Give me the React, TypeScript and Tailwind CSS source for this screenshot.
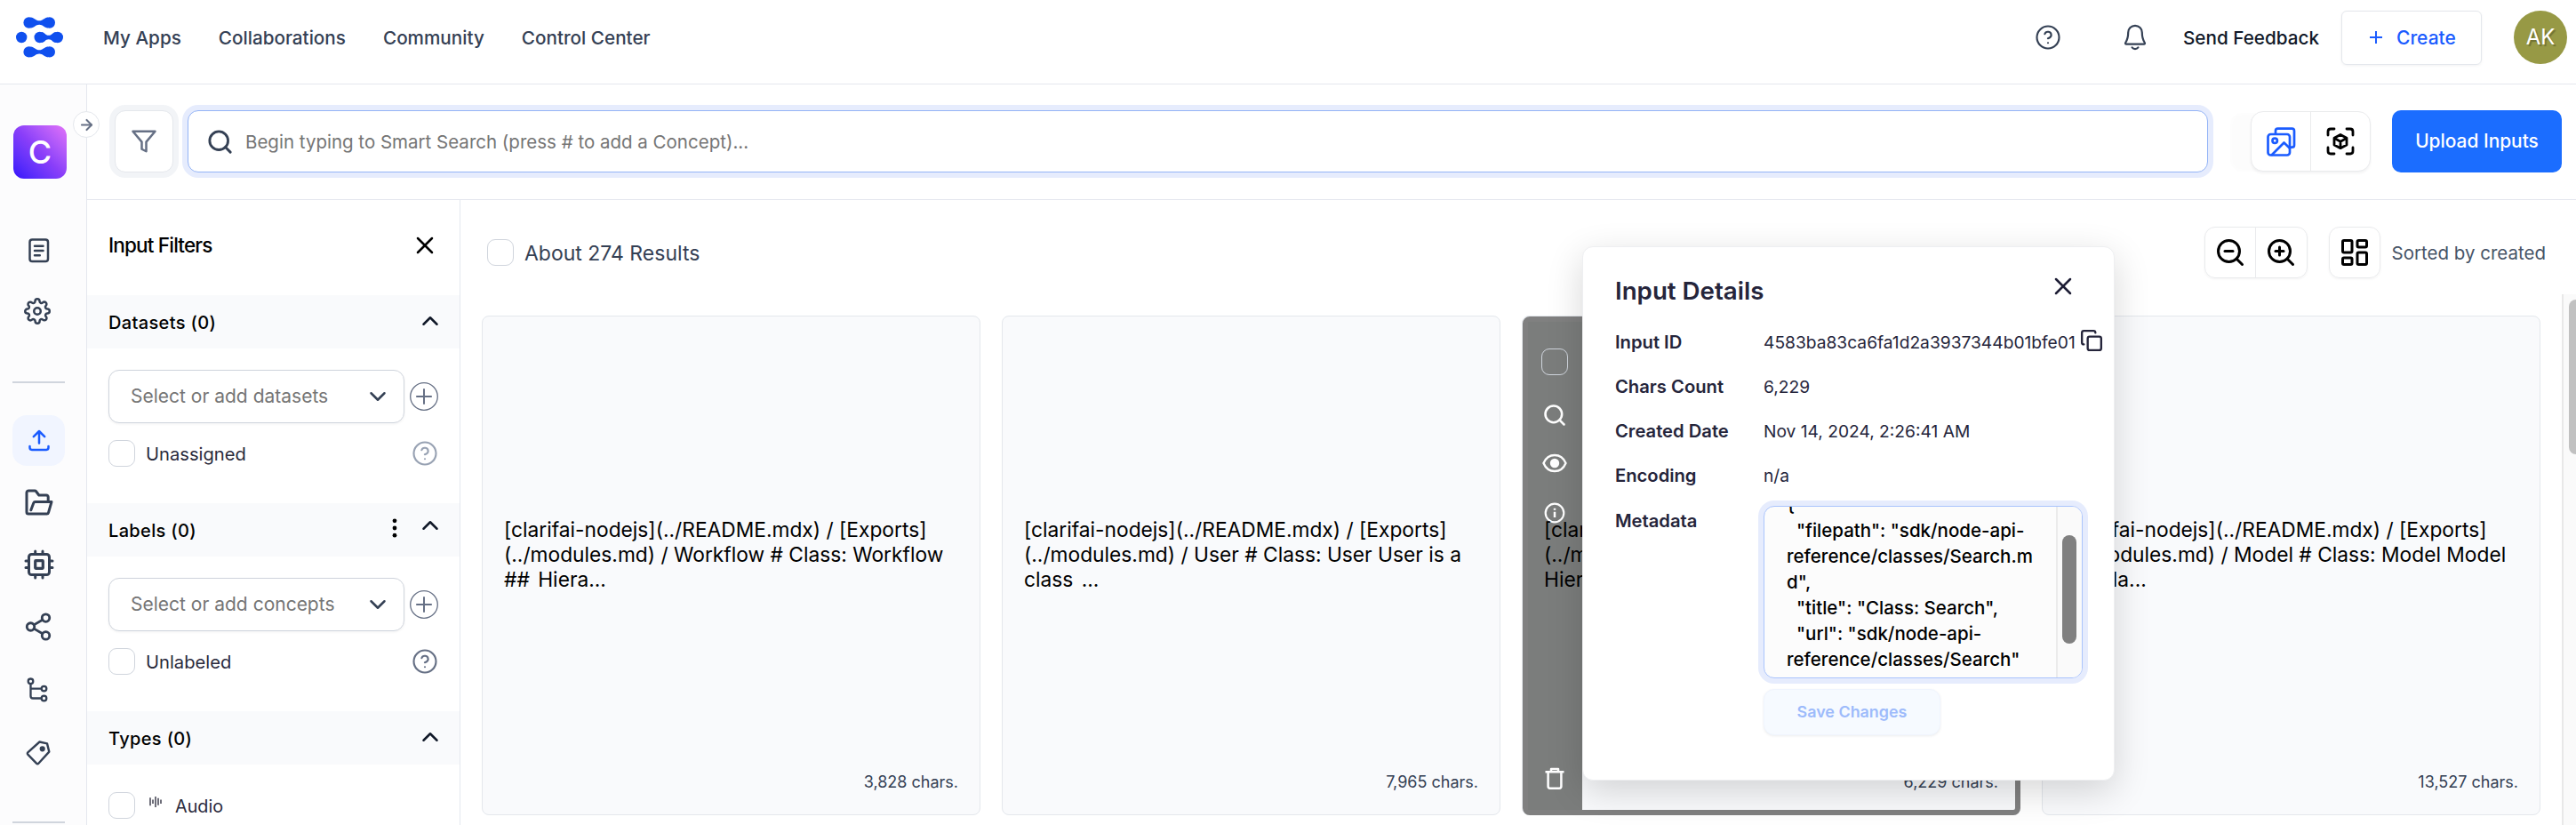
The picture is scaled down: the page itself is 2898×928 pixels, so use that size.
import type { ReactNode } from "react";
import {
  ArrowRight,
  ChevronDown,
  ChevronUp,
  Copy,
  LayoutDashboard,
  Search,
  Share2,
  X,
  ZoomIn,
  ZoomOut,
} from "lucide-react";
import { FiFilter, FiHelpCircle, FiSettings } from "react-icons/fi";

function Logo() {
  const link = (x1: number, x2: number, y: number) => {
    const m = (x1 + x2) / 2;
    return `M${x1 + 2} ${y - 6} C${x1 + 6} ${y - 5.5} ${m - 4} ${y - 2.2} ${m} ${y - 2.2} S${x2 - 6} ${y - 5.5} ${x2 - 2} ${y - 6} V${y + 6} C${x2 - 6} ${y + 5.5} ${m + 4} ${y + 2.2} ${m} ${y + 2.2} S${x1 + 6} ${y + 5.5} ${x1 + 2} ${y + 6}Z`;
  };
  return (
    <svg width="54" height="46" viewBox="0 0 54 46" fill="#0f4fee">
      <circle cx="14.6" cy="6.5" r="6.2" />
      <circle cx="37.8" cy="6.5" r="6.2" />
      <path d={link(14.6, 37.8, 6.5)} />
      <circle cx="6.2" cy="23" r="6.2" />
      <circle cx="26.7" cy="23" r="6.2" />
      <circle cx="46.8" cy="23" r="6.2" />
      <path d={link(26.7, 46.8, 23)} />
      <circle cx="14.6" cy="39.4" r="6.2" />
      <circle cx="37.8" cy="39.4" r="6.2" />
      <path d={link(14.6, 37.8, 39.4)} />
    </svg>
  );
}

function Bell() {
  return (
    <svg width="26" height="30" viewBox="0 0 26 30" fill="none" stroke="#344054" strokeWidth="2.2" strokeLinecap="round" strokeLinejoin="round">
      <path d="M5.2 9.6a7.8 7.8 0 0 1 15.6 0c0 7 1.6 9.200 3 11.400.5.800 0 1.700-.9 1.700H3.100c-.9 0-1.400-.9-.9-1.700 1.400-2.200 3-4.400 3-11.400z" />
      <path d="M9.600 26.400a4.300 4.300 0 0 0 6.800 0" />
    </svg>
  );
}

function DocIcon() {
  return (
    <svg width="24" height="28" viewBox="0 0 24 28" fill="none" stroke="#344054" strokeWidth="2.500" strokeLinecap="round">
      <rect x="1.500" y="1.500" width="20.500" height="24.500" rx="2.800" />
      <path d="M7 8.800h9.500M7 14h9.500M7 19.300h5.800" />
    </svg>
  );
}

function UploadIcon() {
  return (
    <svg width="24" height="25" viewBox="0 0 24 25" fill="none" stroke="#1b5cff" strokeWidth="2.500" strokeLinecap="round" strokeLinejoin="round">
      <path d="M12 15.500V2.200M5.800 8.200 12 2l6.200 6.200" />
      <path d="M1.500 19v1.600c0 1.300 1 2.300 2.300 2.300h16.400c1.300 0 2.300-1 2.300-2.300V19" />
    </svg>
  );
}

function FolderIcon() {
  return (
    <svg width="32" height="30" viewBox="0 0 32 30" fill="none" stroke="#344054" strokeWidth="3" strokeLinejoin="round" strokeLinecap="round">
      <path d="M26.200 13.500V9c0-1.100-.9-2-2-2h-8.400l-3.400-4.500c-.3-.4-.7-.6-1.200-.6H4.300c-1.300 0-2.300 1-2.300 2.300V26c0 1.100.9 2 2 2h20.600c.9 0 1.700-.6 1.900-1.400L30 14.500H11.600c-.8 0-1.500.5-1.800 1.300l-3 8" />
    </svg>
  );
}

function ChipIcon() {
  return (
    <svg width="34" height="34" viewBox="0 0 34 34" fill="none" stroke="#344054" strokeWidth="3" strokeLinecap="round">
      <rect x="5.500" y="5.500" width="23" height="23" rx="3" />
      <rect x="12.700" y="12.700" width="8.600" height="8.600" rx="0.500" strokeWidth="3.200" />
      <path d="M12.700 5V2M21 5V2M12.700 32v-3M21 32v-3M5 13H2M5 20.500H2M32 13h-3M32 20.500h-3" />
    </svg>
  );
}

function TreeIcon() {
  return (
    <svg width="24" height="28" viewBox="0 0 24 28" fill="none" stroke="#344054" strokeWidth="2.300">
      <circle cx="4.500" cy="4.300" r="2.800" />
      <circle cx="19.500" cy="12.600" r="2.800" />
      <circle cx="19.500" cy="23.500" r="2.800" />
      <path d="M4.500 7v14c0 1.400 1.100 2.500 2.500 2.500h9.700M4.500 12.600h12.200" />
    </svg>
  );
}

function TagIcon() {
  return (
    <svg width="28" height="28" viewBox="0 0 28 28" fill="none" stroke="#344054" strokeWidth="2.400" strokeLinejoin="round">
      <path d="M15.500 1.500 24 3.400l2.300 9.200L14.300 25.700c-.6.700-1.600.7-2.300 0L2.300 15.600c-.6-.6-.6-1.600 0-2.200z" />
      <circle cx="18.700" cy="9.300" r="1.900" fill="#344054" stroke="#344054" />
    </svg>
  );
}

function ImagesIcon() {
  return (
    <svg width="33" height="33" viewBox="0 0 33 33" fill="none" stroke="#1b5cff" strokeWidth="2.700" strokeLinejoin="round" strokeLinecap="round">
      <path d="M10 7V4.200C10 2.700 11 1.700 12.500 1.700h16c1.500 0 2.500 1 2.500 2.500v16c0 1.500-1 2.500-2.500 2.500h-1.800" />
      <rect x="1.500" y="8" width="24.500" height="23.500" rx="3" />
      <circle cx="9.200" cy="15.300" r="2.700" />
      <path d="M6 31 19.500 17.500l6.500 6.200" />
    </svg>
  );
}

function CubeScanIcon() {
  return (
    <svg width="32" height="32" viewBox="0 0 32 32" fill="none" stroke="#000" strokeWidth="2.800" strokeLinejoin="round" strokeLinecap="round">
      <path d="M2 9V5c0-1.700 1.300-3 3-3h4M23 2h4c1.700 0 3 1.300 3 3v4M30 23v4c0 1.700-1.300 3-3 3h-4M9 30H5c-1.700 0-3-1.300-3-3v-4" />
      <path d="M16 8.500 23 12.300v7.600L16 23.700 9 19.900v-7.600zM9.300 12.600 16 16.200l6.700-3.600M16 16.200v7" />
    </svg>
  );
}

function AudioIcon() {
  return (
    <svg width="14" height="12" viewBox="0 0 14 12" stroke="#222233" strokeWidth="1.300">
      <path d="M1 1.200v9M4 3.500v4.500M7 0v12M10 1.800v8M13 3.500v4.500" />
    </svg>
  );
}

function EyeIcon() {
  return (
    <svg width="28" height="22" viewBox="0 0 28 22" fill="none" stroke="#fff" strokeWidth="2.400">
      <path d="M1.500 11C4 5 8.700 2 14 2s10 3 12.500 9c-2.500 6-7.200 9-12.500 9S4 17 1.500 11z" />
      <circle cx="14" cy="11" r="5.200" fill="#fff" stroke="none" />
    </svg>
  );
}

function InfoIcon() {
  return (
    <svg width="24" height="24" viewBox="0 0 24 24" fill="none" stroke="#fff" strokeWidth="2.200">
      <circle cx="12" cy="12" r="10.300" />
      <path d="M12 10.700V17M12 6.800v2" strokeWidth="2.500" />
    </svg>
  );
}

function TrashIcon() {
  return (
    <svg width="22" height="25" viewBox="0 0 22 25" fill="none" stroke="#fff" strokeWidth="2.500" strokeLinejoin="round">
      <path d="M0.500 5.200h21M7 5V2h8v3M3.600 6v15.500c0 1.300.9 2.200 2.200 2.200h10.400c1.300 0 2.200-.9 2.200-2.200V6" />
    </svg>
  );
}

function Checkbox() {
  return <div className="size-[30px] shrink-0 rounded-[9px] border border-[#d0d5dd] bg-white" />;
}

function SectionHeader({ title, dots }: { title: string; dots?: boolean }) {
  return (
    <div className="flex h-[60px] shrink-0 items-center justify-between bg-[#f9fafc] pr-[18px] pl-6">
      <span className="pt-[2px] text-[20px] font-medium tracking-[0.35px] text-black">{title}</span>
      {dots ? (
        <div className="flex items-center gap-[22px] pb-[10px]">
          <svg width="6" height="22" viewBox="0 0 6 22" fill="#000" className="mt-[5px]">
            <circle cx="3" cy="2.800" r="2.400" />
            <circle cx="3" cy="11" r="2.400" />
            <circle cx="3" cy="19.200" r="2.400" />
          </svg>
          <ChevronUp size={30} strokeWidth={2} color="#101828" />
        </div>
      ) : (
        <ChevronUp size={30} strokeWidth={2} color="#101828" className="mb-[2px]" />
      )}
    </div>
  );
}

function FilterSection({ title, placeholder, option, dots, muted }: { title: string; placeholder: string; option: string; dots?: boolean; muted?: boolean }) {
  return (
    <>
      <SectionHeader title={title} dots={dots} />
      <div className="flex h-[174px] shrink-0 flex-col gap-[18px] pt-6 pr-6 pl-6">
        <div className="flex items-center gap-1.5">
          <div className="flex h-[60px] w-[333px] items-center justify-between rounded-xl border border-[#d0d5dd] bg-white pr-[14px] pl-6 shadow-[0_1px_3px_rgba(16,24,40,0.06)]">
            <span className="text-[21px] text-[#757575]">{placeholder}</span>
            <ChevronDown size={30} strokeWidth={2} color="#344054" />
          </div>
          <svg width="32" height="32" viewBox="0 0 32 32" fill="none" stroke="#667085">
            <circle cx="16" cy="16" r="15.300" strokeWidth="1.300" />
            <path d="M16 7.200v17.600M7.200 16h17.600" strokeWidth="2" />
          </svg>
        </div>
        <div className="flex items-center justify-between">
          <div className="flex items-center gap-3">
            <Checkbox />
            <span className="pt-[2px] text-[20.2px] text-[#2a2a3c]">{option}</span>
          </div>
          <FiHelpCircle size={30} strokeWidth={1.700} color={muted ? "#98a2b3" : "#667085"} />
        </div>
      </div>
    </>
  );
}

function Card({ lines, chars, children }: { lines: string[]; chars: string; children?: ReactNode }) {
  return (
    <div className="relative flex h-[562px] flex-1 flex-col justify-between rounded-lg border border-[#e4e7ec] bg-[#f9fafc] pt-[226px] pr-6 pb-[22px] pl-[24px]">
      {children}
      <p className="relative text-[22.75px] leading-[28px] text-black">
        {lines.map((l) => (
          <span key={l} className="block whitespace-nowrap last:[word-spacing:3px]">{l}</span>
        ))}
      </p>
      <span className="relative self-end text-[18px] leading-[28px] text-[#344054]">{chars}</span>
    </div>
  );
}

function Detail({ label, value }: { label: string; value: ReactNode }) {
  return (
    <div className="flex h-[50px] items-center">
      <span className="w-[167px] shrink-0 text-[20.2px] font-semibold text-[#25253b]">{label}</span>
      <span className="flex items-center gap-[5px] text-[19.2px] whitespace-nowrap text-[#25253b]">{value}</span>
    </div>
  );
}

function InputDetails() {
  return (
    <div className="absolute top-[277px] left-[1780px] flex h-[601px] w-[599px] flex-col rounded-xl border border-[#eeeff1] bg-white pl-[36px] shadow-[0_12px_40px_rgba(0,0,0,0.16)]">
      <div className="flex h-[82px] items-center justify-between pt-4 pr-[41px]">
        <h2 className="pt-px text-[27.7px] font-semibold text-[#25253b]">Input Details</h2>
        <X size={32} strokeWidth={1.900} color="#1d1d35" className="mb-[10px]" />
      </div>
      <Detail
        label="Input ID"
        value={
          <>
            4583ba83ca6fa1d2a3937344b01bfe01
            <Copy size={26} strokeWidth={2.200} color="#25253b" className="mb-1 shrink-0" />
          </>
        }
      />
      <Detail label="Chars Count" value="6,229" />
      <Detail label="Created Date" value="Nov 14, 2024, 2:26:41 AM" />
      <Detail label="Encoding" value="n/a" />
      <div className="flex">
        <span className="flex h-[52px] w-[167px] shrink-0 items-center text-[20.2px] font-semibold text-[#25253b]">Metadata</span>
        <div className="flex flex-col items-start pt-[9px]">
          <div className="flex h-[194px] w-[359px] overflow-hidden rounded-xl border border-[#aac4fc] bg-[#fcfcfc] shadow-[0_0_0_6px_#e6ecfd]">
            <div className="flex min-w-0 flex-1 flex-col justify-end pb-[6px] pl-[25px] text-[20.500px] leading-[29px] font-[450] whitespace-pre text-black">
              <span>{"{"}</span>
              <span>{'  "filepath": "sdk/node-api-'}</span>
              <span>reference/classes/Search.m</span>
              <span>{'d",'}</span>
              <span>{'  "title": "Class: Search",'}</span>
              <span>{'  "url": "sdk/node-api-'}</span>
              <span>{'reference/classes/Search"'}</span>
            </div>
            <div className="w-[29px] shrink-0 border-l-2 border-[#ebebeb] bg-[#fafafa] pt-[32px] pl-[5px]">
              <div className="h-[122px] w-[16px] rounded-full bg-[#808080]" />
            </div>
          </div>
          <button className="mt-[12px] flex h-[52px] w-[199px] items-center justify-center rounded-xl border border-[#f0f5fe] bg-[#f6faff] text-[17.9px] font-semibold text-[#9dbbfb] shadow-[0_1px_3px_rgba(16,24,40,0.08)]">
            Save Changes
          </button>
        </div>
      </div>
    </div>
  );
}

export default function App() {
  return (
    <div className="relative flex h-[928px] w-[2898px] flex-col overflow-hidden bg-white font-['Inter',sans-serif]">
      <header className="flex h-[95px] shrink-0 items-center justify-between border-b border-[#e4e7ee] pr-[10px] pb-[10px] pl-[18px]">
        <div className="flex items-center">
          <Logo />
          <nav className="ml-[44px] flex gap-[42px] pt-[2px] text-[20.7px] font-[450] text-[#344054]">
            <span>My Apps</span>
            <span>Collaborations</span>
            <span>Community</span>
            <span>Control Center</span>
          </nav>
        </div>
        <div className="flex items-center">
          <FiHelpCircle size={30} strokeWidth={1.700} color="#344054" />
          <div className="mr-[41px] ml-[70px]">
            <Bell />
          </div>
          <span className="pt-[2px] text-[20.7px] font-medium text-[#101828]">Send Feedback</span>
          <button className="ml-[25px] flex h-[61px] w-[158px] items-center rounded-md border border-[#e4e7ec] pl-[31px] shadow-[0_1px_3px_rgba(16,24,40,0.06)]">
            <svg width="14" height="14" viewBox="0 0 14 14" stroke="#1b5cff" strokeWidth="2">
              <path d="M7 0v14M0 7h14" />
            </svg>
            <span className="ml-[16px] pt-px text-[21px] font-medium text-[#1b5cff]">Create</span>
          </button>
          <div className="ml-9 flex size-[60px] items-center justify-center rounded-full bg-[#979945] text-[24px] text-white [text-shadow:2px_2px_1px_rgba(0,0,0,0.25)]">
            AK
          </div>
        </div>
      </header>

      <div className="flex min-h-0 flex-1">
        <aside className="relative flex w-[98px] shrink-0 flex-col items-center border-r border-[#e4e7ee] bg-[#fcfcfd] pr-[10px]">
          <div className="mt-[46px] ml-[3px] flex size-[60px] shrink-0 items-center justify-center rounded-xl bg-linear-to-tr from-[#3408fb] via-[#8a3ef9] to-[#e371f8] text-[36px] font-medium text-white">
            C
          </div>
          <div className="absolute top-[30px] right-[-15px] flex size-[30px] items-center justify-center rounded-full border border-[#e4e7ec] bg-white">
            <ArrowRight size={19} strokeWidth={2.600} color="#667085" />
          </div>
          <div className="flex w-[59px] flex-col items-center pt-[48px]">
            <div className="flex h-[66px] items-center"><DocIcon /></div>
            <div className="flex h-[70px] items-center pr-[4px]"><FiSettings size={30} color="#344054" /></div>
            <div className="mt-[44px] h-[2px] w-full bg-[#d0d5dd]" />
            <div className="mt-[36px] flex h-[57px] w-full items-center justify-center rounded-2xl bg-[#f1f5ff]"><UploadIcon /></div>
            <div className="mt-[6px] flex h-[70px] items-center"><FolderIcon /></div>
            <div className="flex h-[70px] items-center"><ChipIcon /></div>
            <div className="flex h-[70px] items-center pr-px"><Share2 size={34} color="#344054" /></div>
            <div className="flex h-[72px] items-center pr-[4px]"><TreeIcon /></div>
            <div className="flex h-[70px] items-center pr-px"><TagIcon /></div>
            <div className="mt-[42px] h-[2px] w-full shrink-0 bg-[#d0d5dd]" />
          </div>
        </aside>

        <main className="flex min-w-0 flex-1 flex-col">
          <div className="flex h-[130px] shrink-0 items-center border-b border-[#e4e7ee] pb-px pl-[31px]">
            <button className="flex h-[70px] w-[66px] items-center justify-center rounded-xl border border-[#e4e7ec] bg-white shadow-[0_0_0_6px_#f2f4f7]">
              <FiFilter size={30} color="#667085" />
            </button>
            <div className="ml-4 flex h-[70px] w-[2273px] items-center gap-[13px] rounded-xl border border-[#94b4f6] bg-white pl-[20px] shadow-[0_0_0_6px_#e6ecfd]">
              <Search size={31} strokeWidth={2.200} color="#344054" />
              <span className="pt-[2px] text-[20.5px] text-[#757575]">Begin typing to Smart Search (press # to add a Concept)...</span>
            </div>
            <div className="ml-[48px] flex h-[68px] w-[135px] rounded-[14px] border border-[#eaebed] bg-white shadow-[-24px_1px_2px_-1px_rgba(16,24,40,0.012),0_2px_3px_rgba(16,24,40,0.05)]">
              <div className="flex flex-1 items-center justify-center border-r border-[#eaebed]"><ImagesIcon /></div>
              <div className="flex flex-1 items-center justify-center"><CubeScanIcon /></div>
            </div>
            <button className="ml-[24px] flex h-[70px] w-[191px] items-center justify-center rounded-[10px] bg-[#1b6dff] text-[20.9px] font-medium text-white">
              Upload Inputs
            </button>
          </div>

          <div className="flex min-h-0 flex-1">
            <section className="flex w-[420px] shrink-0 flex-col overflow-hidden border-r border-[#e4e7ee]">
              <div className="flex h-[107px] shrink-0 items-center justify-between pr-[23px] pb-[5px] pl-6">
                <h3 className="text-[22.5px] font-medium tracking-[-0.82px] text-black">Input Filters</h3>
                <X size={32} strokeWidth={1.900} color="#000" />
              </div>
              <FilterSection title="Datasets (0)" placeholder="Select or add datasets" option="Unassigned" muted />
              <FilterSection title="Labels (0)" placeholder="Select or add concepts" option="Unlabeled" dots />
              <SectionHeader title="Types (0)" />
              <div className="flex items-center pt-[30px] pl-6">
                <Checkbox />
                <div className="mr-[15px] mb-2 ml-4"><AudioIcon /></div>
                <span className="pt-[3px] text-[19.8px] text-[#2a2a3c]">Audio</span>
              </div>
            </section>

            <section className="flex min-w-0 flex-1 flex-col">
              <div className="flex h-[106px] shrink-0 items-center justify-between pt-[12px] pr-[34px] pl-[30px]">
                <div className="flex items-center gap-3">
                  <Checkbox />
                  <span className="pt-[2px] text-[23px] text-[#344054]">About 274 Results</span>
                </div>
                <div className="flex items-center">
                  <div className="flex h-[58px] w-[116px] rounded-xl border border-[#eaebed] shadow-[0_1px_3px_rgba(16,24,40,0.05)]">
                    <div className="flex flex-1 items-center justify-center border-r border-[#eaebed]"><ZoomOut size={36} color="#000" /></div>
                    <div className="flex flex-1 items-center justify-center"><ZoomIn size={36} color="#000" /></div>
                  </div>
                  <div className="ml-6 flex size-[58px] items-center justify-center rounded-xl border border-[#eaebed] shadow-[0_1px_3px_rgba(16,24,40,0.05)]">
                    <LayoutDashboard size={36} color="#000" />
                  </div>
                  <span className="ml-[13px] pt-[2px] text-[20.5px] text-[#475467]">Sorted by created</span>
                </div>
              </div>
              <div className="flex min-h-0 flex-1">
                <div className="flex min-w-0 flex-1 gap-[24px] pt-[24px] pr-[24px] pl-[24px]">
                  <Card
                    lines={["[clarifai-nodejs](../README.mdx) / [Exports]", "(../modules.md) / Workflow # Class: Workflow", "## Hiera..."]}
                    chars="3,828 chars."
                  />
                  <Card
                    lines={["[clarifai-nodejs](../README.mdx) / [Exports]", "(../modules.md) / User # Class: User User is a", "class ..."]}
                    chars="7,965 chars."
                  />
                  <Card
                    lines={["[clarifai-nodejs](../README.mdx) / [Exports]", "(../modules.md) / Search # Class: Search ##", "Hier..."]}
                    chars="6,229 chars."
                  >
                    <div className="absolute top-0 -right-px -bottom-px left-0 rounded-lg border-[6px] border-[#808080]" />
                    <div className="absolute top-[6px] bottom-[5px] left-[6px] flex w-[61px] flex-col items-center bg-[#7b7d7c] pt-[30px] pr-px">
                      <div className="size-[30px] rounded-[9px] border border-[#d0d5dd]" />
                      <Search size={28} strokeWidth={2.200} color="#fff" className="mt-[31px]" />
                      <div className="mt-[29px]"><EyeIcon /></div>
                      <div className="mt-[33px]"><InfoIcon /></div>
                      <div className="mt-auto mb-[23px]"><TrashIcon /></div>
                    </div>
                  </Card>
                  <Card
                    lines={["[clarifai-nodejs](../README.mdx) / [Exports]", "(../modules.md) / Model # Class: Model Model", "## Cla..."]}
                    chars="13,527 chars."
                  />
                </div>
                <div className="w-[16px] shrink-0 overflow-hidden border-l-2 border-[#e8e8e8] bg-[#fafafa] pt-[6px] pl-[6px]">
                  <div className="h-[174px] w-[16px] rounded-full bg-[#c1c1c1]" />
                </div>
              </div>
            </section>
          </div>
        </main>
      </div>
      <InputDetails />
    </div>
  );
}
